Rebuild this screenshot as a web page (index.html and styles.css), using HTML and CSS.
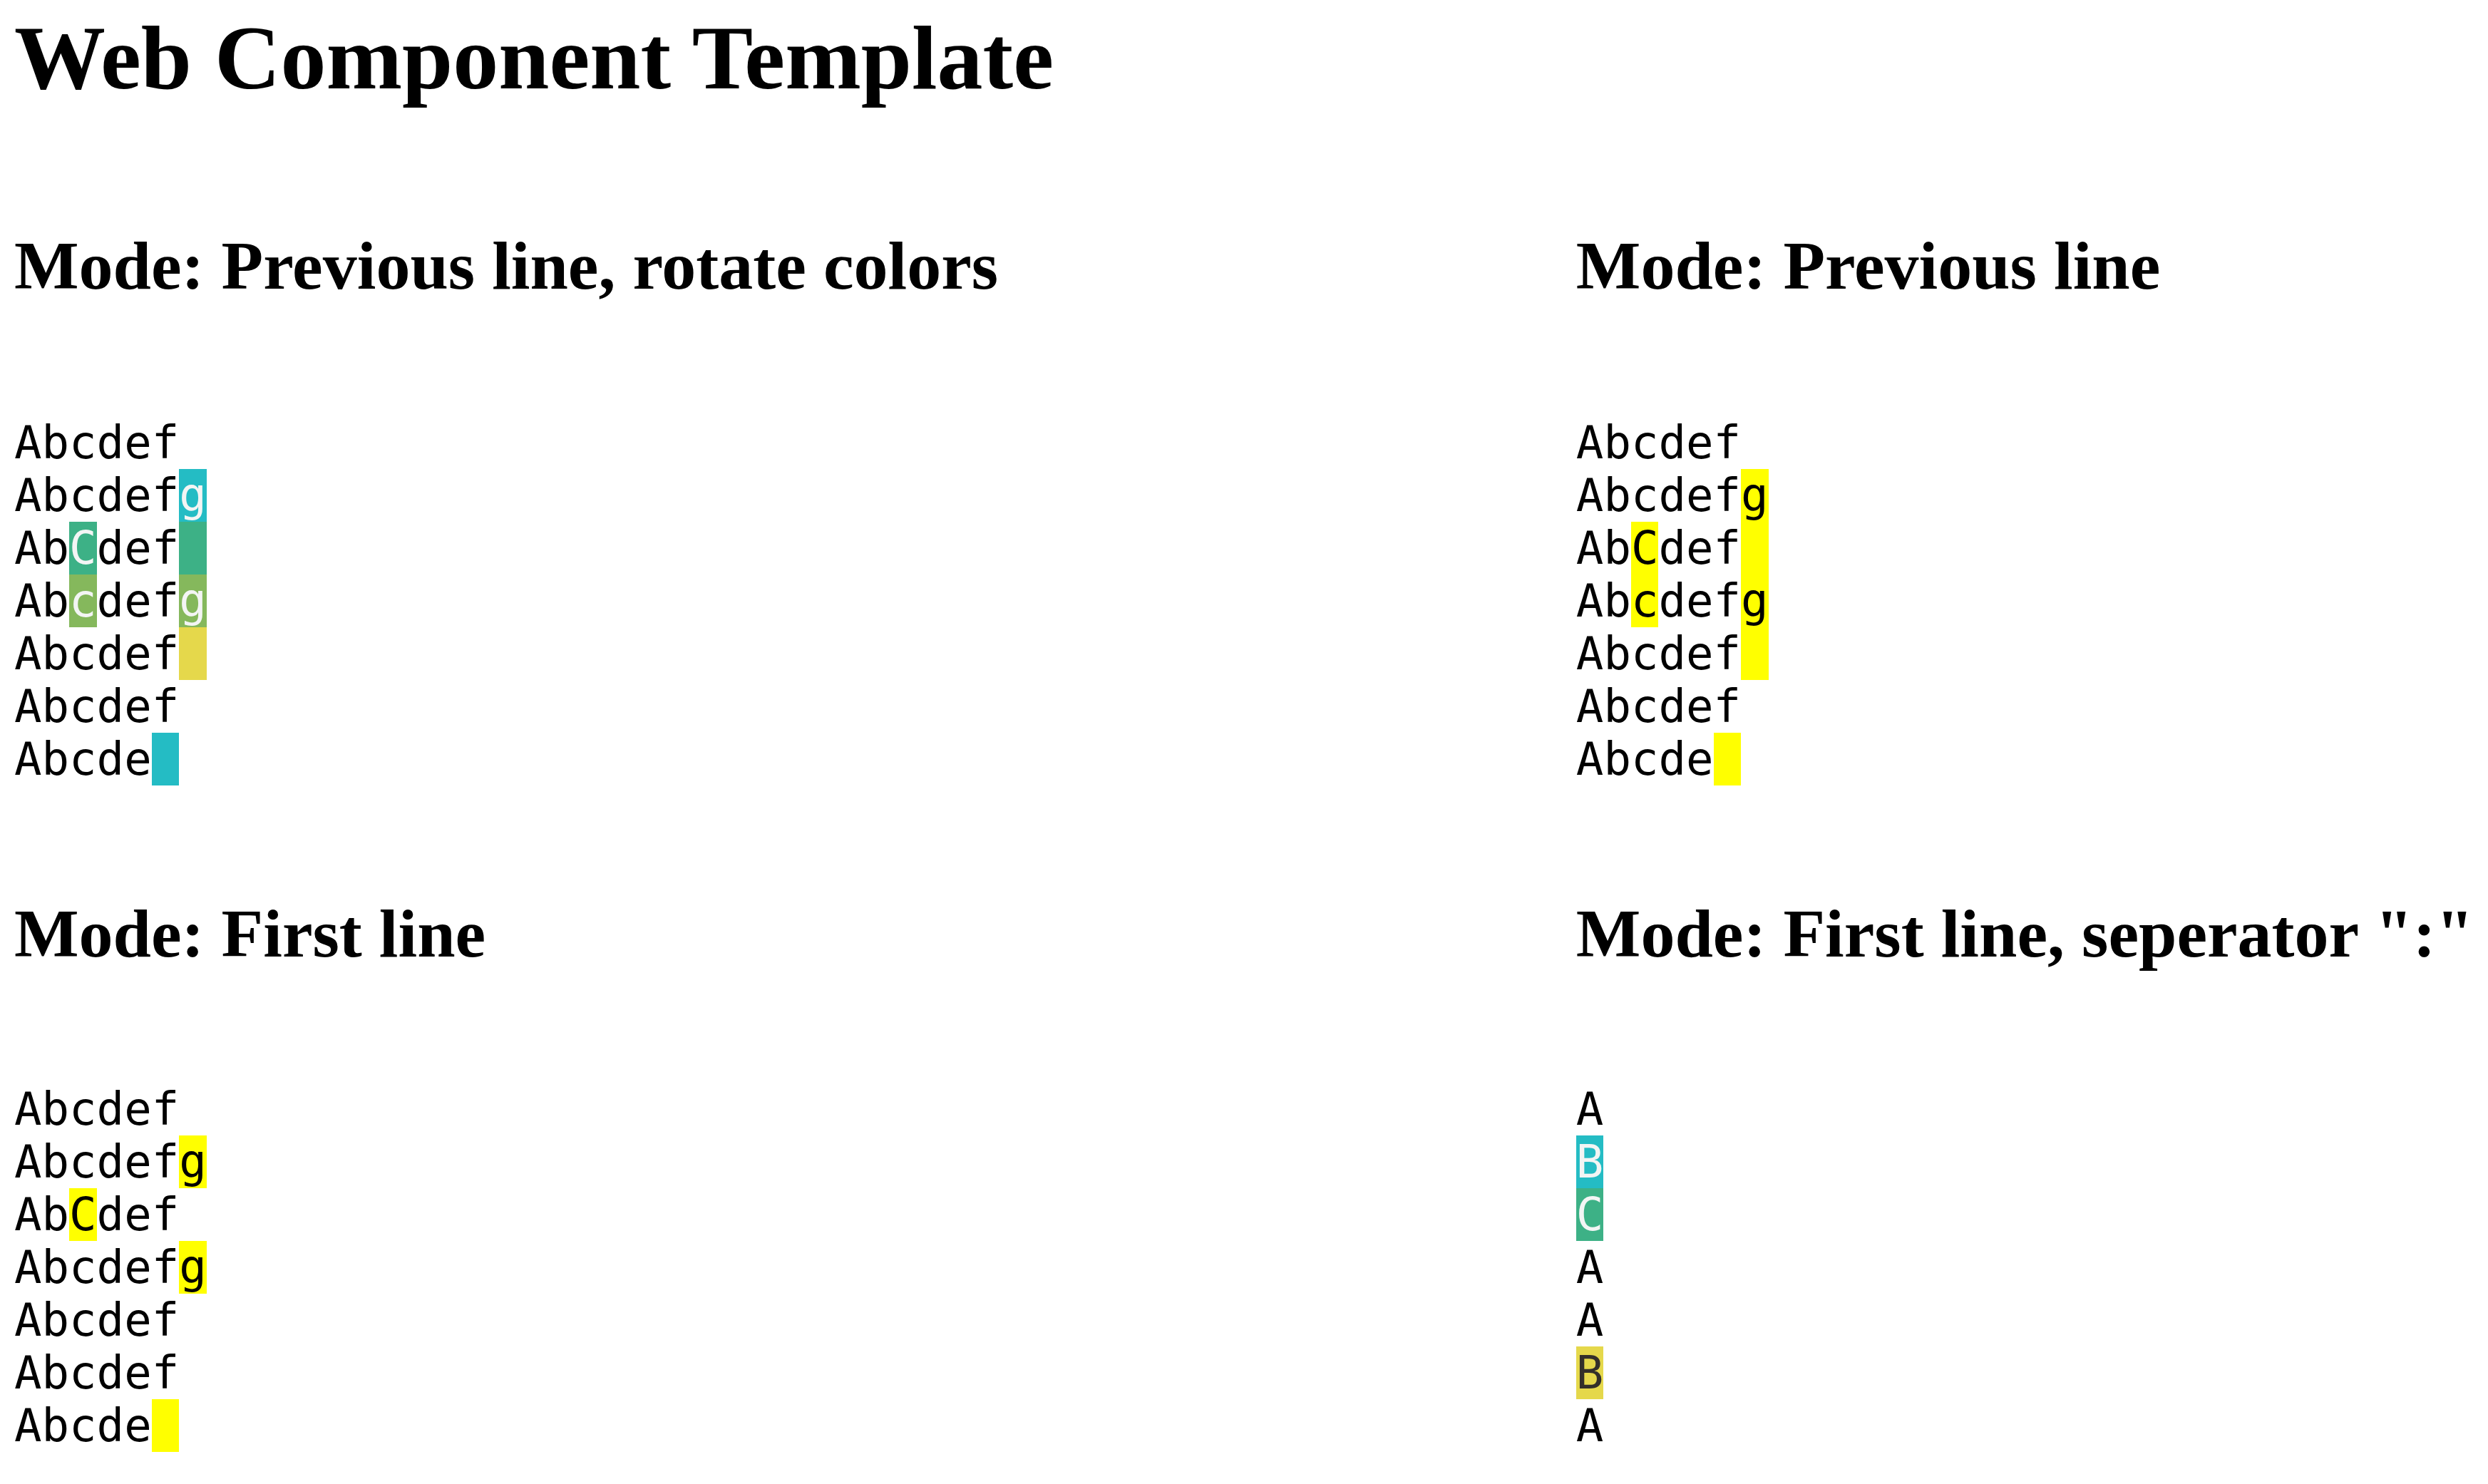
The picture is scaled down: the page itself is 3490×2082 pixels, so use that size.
FILE: index.html
```html
<!DOCTYPE html>
<html lang="en">
<head>
<meta charset="utf-8">
<title>Web Component Template</title>
<link rel="stylesheet" href="styles.css">
</head>
<body>
<h1 class="title">Web Component Template</h1>
<main class="grid">
  <section class="demo">
    <h2 class="mode">Mode: Previous line, rotate colors</h2>
    <div class="lines lines-upper">
      <div class="row">Abcdef</div>
      <div class="row">Abcdef<span class="hl c-teal">g</span></div>
      <div class="row">Ab<span class="hl c-green">C</span>def<span class="hl c-green">&nbsp;</span></div>
      <div class="row">Ab<span class="hl c-lime">c</span>def<span class="hl c-lime">g</span></div>
      <div class="row">Abcdef<span class="hl c-mustard">&nbsp;</span></div>
      <div class="row">Abcdef</div>
      <div class="row">Abcde<span class="hl c-teal">&nbsp;</span></div>
    </div>
  </section>
  <section class="demo">
    <h2 class="mode">Mode: Previous line</h2>
    <div class="lines lines-upper">
      <div class="row">Abcdef</div>
      <div class="row">Abcdef<span class="hl c-yellow">g</span></div>
      <div class="row">Ab<span class="hl c-yellow">C</span>def<span class="hl c-yellow">&nbsp;</span></div>
      <div class="row">Ab<span class="hl c-yellow">c</span>def<span class="hl c-yellow">g</span></div>
      <div class="row">Abcdef<span class="hl c-yellow">&nbsp;</span></div>
      <div class="row">Abcdef</div>
      <div class="row">Abcde<span class="hl c-yellow">&nbsp;</span></div>
    </div>
  </section>
  <section class="demo">
    <h2 class="mode">Mode: First line</h2>
    <div class="lines lines-lower">
      <div class="row">Abcdef</div>
      <div class="row">Abcdef<span class="hl c-yellow">g</span></div>
      <div class="row">Ab<span class="hl c-yellow">C</span>def</div>
      <div class="row">Abcdef<span class="hl c-yellow">g</span></div>
      <div class="row">Abcdef</div>
      <div class="row">Abcdef</div>
      <div class="row">Abcde<span class="hl c-yellow">&nbsp;</span></div>
    </div>
  </section>
  <section class="demo">
    <h2 class="mode">Mode: First line, seperator ":"</h2>
    <div class="lines lines-lower">
      <div class="row">A</div>
      <div class="row"><span class="hl c-teal">B</span></div>
      <div class="row"><span class="hl c-green">C</span></div>
      <div class="row">A</div>
      <div class="row">A</div>
      <div class="row"><span class="hl c-mustard">B</span></div>
      <div class="row">A</div>
    </div>
  </section>
</main>
</body>
</html>
```

FILE: styles.css
```css
html, body {
  background: #ffffff;
}

body {
  margin: 0;
  padding: 8px 20px 0 20px;
  color: #000000;
  font-family: "Liberation Serif", "Times New Roman", serif;
}

.title {
  margin: 0;
  font-size: 128px;
  line-height: 147px;
  font-weight: 700;
}

.grid {
  display: grid;
  grid-template-columns: 1fr auto;
  margin-top: 163px;
  row-gap: 153px;
}

.mode {
  margin: 0;
  font-size: 96px;
  line-height: 110px;
  font-weight: 700;
  white-space: nowrap;
}

.lines {
  font-family: "DejaVu Sans Mono", "Liberation Mono", monospace;
  font-size: 64px;
  line-height: normal;
}

.lines-upper {
  margin-top: 156px;
}

.lines-lower {
  margin-top: 154px;
}

.row {
  display: block;
  white-space: pre;
}

.c-teal {
  background: #24bcc4;
  color: #f3f5f4;
}

.c-green {
  background: #3db186;
  color: #f3f5f4;
}

.c-lime {
  background: #85b85c;
  color: #f3f5f4;
}

.c-mustard {
  background: #e5d84b;
  color: #332f2a;
}

.c-yellow {
  background: #ffff00;
  color: #000000;
}
```
